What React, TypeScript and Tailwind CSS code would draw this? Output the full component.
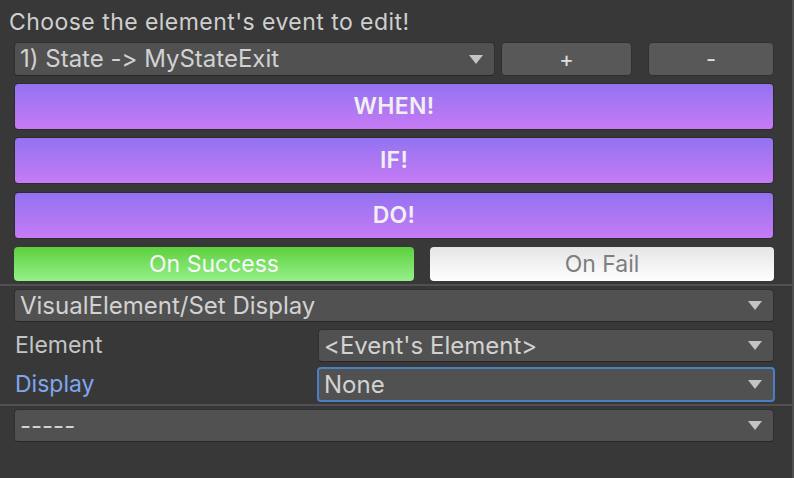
import React from "react";

function Arrow() {
  return (
    <svg width="14" height="9" viewBox="0 0 14 9" className="shrink-0">
      <path d="M0 0 H14 L7 9 Z" fill="#c4c4c4" />
    </svg>
  );
}

function Dropdown({ label, className = "", focused = false }: { label: string; className?: string; focused?: boolean }) {
  return (
    <div
      className={`flex items-center justify-between rounded-[4px] bg-[#515151] pr-[11px] text-[24px] text-[#d2d2d2] ${
        focused ? "border-2 border-[#4a7fc6] pl-[5px]" : "border border-[#2f2f2f] border-b-[#262626] pl-[5px]"
      } ${className}`}
    >
      <span className="leading-none whitespace-nowrap">{label}</span>
      <Arrow />
    </div>
  );
}

function BigButton({ label }: { label: string }) {
  return (
    <div className="flex h-[47px] items-center justify-center rounded-[4px] border border-[#2c2c2c] bg-gradient-to-b from-[#9272f1] to-[#c77af5] text-[23px] font-semibold tracking-[0.3px] text-[#f0f0f0]">
      {label}
    </div>
  );
}

export default function App() {
  return (
    <div className="flex h-[478px] w-[794px] bg-[#383838] font-['Inter',sans-serif] [font-feature-settings:'calt'_0,'liga'_0]">
      <div className="flex w-[792px] flex-col">
        {/* header */}
        <div className="flex h-[42px] items-center pl-[9px] pt-[2px] text-[23px] tracking-[0.45px] text-[#cfcfcf]">
          Choose the element's event to edit!
        </div>

        <div className="flex flex-col pl-[14px] pr-[18px]">
          {/* event picker row */}
          <div className="flex h-[34px] items-stretch">
            <Dropdown label="1) State -> MyStateExit" className="w-[481px]" />
            <div className="ml-[6px] flex w-[131px] items-center justify-center rounded-[4px] border border-[#2f2f2f] bg-[#585858] text-[22px] text-[#e0e0e0]">
              +
            </div>
            <div className="ml-[16px] flex w-[126px] items-center justify-center rounded-[4px] border border-[#2f2f2f] bg-[#585858] text-[22px] text-[#e0e0e0]">
              -
            </div>
          </div>

          <div className="mt-[7px] flex flex-col gap-[8px]">
            <BigButton label="WHEN!" />
            <div className="-mt-[1px]">
              <BigButton label="IF!" />
            </div>
            <BigButton label="DO!" />
          </div>

          {/* success / fail tabs */}
          <div className="mt-[8px] flex h-[34px]">
            <div className="flex w-[400px] items-center justify-center rounded-[4px] bg-gradient-to-b from-[#5cd03a] to-[#95f088] text-[23px] text-[#f8f8f8]">
              On Success
            </div>
            <div className="ml-[16px] flex flex-1 items-center justify-center rounded-[4px] bg-gradient-to-b from-[#e5e5e5] to-[#ffffff] text-[23px] text-[#7e7e7e]">
              On Fail
            </div>
          </div>
        </div>

        <div className="mt-[3px] h-[2px] bg-[#505050]" />

        <div className="mt-[3px] flex flex-col pl-[14px] pr-[18px]">
          <Dropdown label="VisualElement/Set Display" className="h-[33px]" />

          <div className="mt-[7px] flex h-[33px] items-stretch">
            <div className="flex w-[304px] items-center pl-[1px] text-[23px] text-[#c4c4c4]">Element</div>
            <Dropdown label="<Event's Element>" className="flex-1" />
          </div>

          <div className="mt-[5px] flex h-[35px] items-stretch">
            <div className="flex w-[303px] items-center pl-[1px] text-[23px] text-[#7fa7ee]">Display</div>
            <Dropdown label="None" focused className="-mr-[1px] flex-1" />
          </div>
        </div>

        <div className="mt-[2px] h-[2px] bg-[#505050]" />

        <div className="mt-[3px] flex flex-col pl-[14px] pr-[18px]">
          <Dropdown label="-----" className="h-[33px]" />
        </div>
      </div>
      <div className="w-[2px] bg-[#505050]" />
    </div>
  );
}
